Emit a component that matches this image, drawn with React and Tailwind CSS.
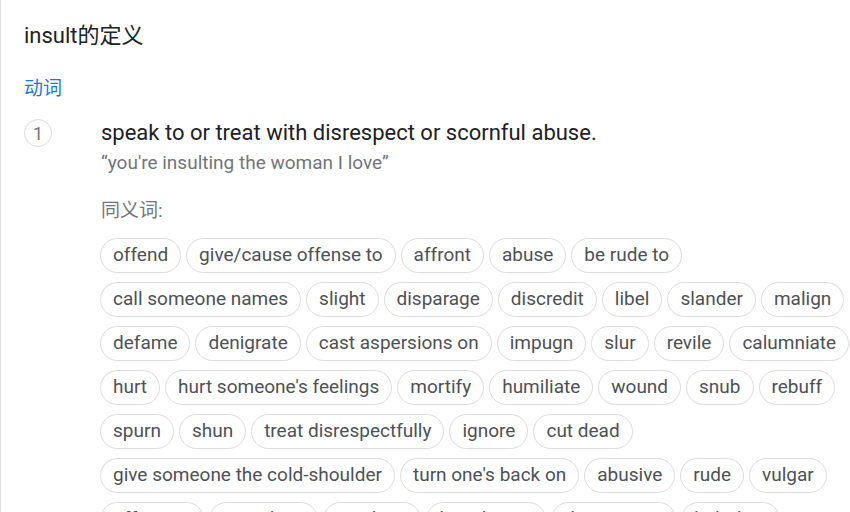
import React from "react";

const rows = [
  "offend", "give/cause offense to", "affront", "abuse", "be rude to",
  "call someone names", "slight", "disparage", "discredit", "libel", "slander", "malign",
  "defame", "denigrate", "cast aspersions on", "impugn", "slur", "revile", "calumniate",
  "hurt", "hurt someone's feelings", "mortify", "humiliate", "wound", "snub", "rebuff",
  "spurn", "shun", "treat disrespectfully", "ignore", "cut dead",
  "give someone the cold-shoulder", "turn one's back on", "abusive", "rude", "vulgar",
  "offensive", "scurrilous", "insulting", "humiliating", "disparaging", "belittling",
];

export default function App() {
  return (
    <div
      className="w-[850px] h-[512px] overflow-hidden bg-white border-l border-[#dadce0]"
      style={{ fontFamily: "Roboto, 'Noto Sans CJK SC', sans-serif" }}
    >
      <div className="pl-[23px] pt-[22px]">
        <div className="text-[22px] leading-[28px] text-[#202124]">insult的定义</div>
        <div className="mt-[26px] text-[19px] leading-[26px] text-[#1a73e8]">动词</div>
        <div className="mt-[17px] flex">
          <div className="w-[28px] h-[28px] rounded-full border border-[#dadce0] flex items-center justify-center text-[18px] text-[#70757a] shrink-0">
            1
          </div>
          <div className="ml-[49px] flex flex-col">
            <div className="text-[22px] leading-[30px] text-[#202124] -mt-[1px]">
              speak to or treat with disrespect or scornful abuse.
            </div>
            <div className="mt-[2px] text-[19px] leading-[26px] text-[#70757a]">
              “you're insulting the woman I love”
            </div>
            <div className="mt-[22px] text-[19px] leading-[26px] text-[#70757a]">同义词:</div>
            <div className="mt-[14px] -ml-[1px] w-[760px] flex flex-wrap gap-x-[5px] gap-y-[9px]">
              {rows.map((w) => (
                <div
                  key={w}
                  className="h-[35px] px-[12px] rounded-full border border-[#dadce0] flex items-center text-[19px] text-[#4d5156] whitespace-nowrap"
                >
                  {w}
                </div>
              ))}
            </div>
          </div>
        </div>
      </div>
    </div>
  );
}
